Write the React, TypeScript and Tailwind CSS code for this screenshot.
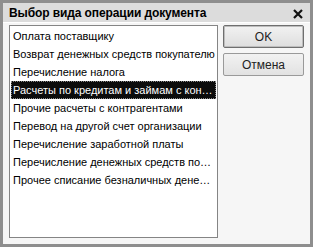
const items = [
  "Оплата поставщику",
  "Возврат денежных средств покупателю",
  "Перечисление налога",
  "Расчеты по кредитам и займам с контрагентами",
  "Прочие расчеты с контрагентами",
  "Перевод на другой счет организации",
  "Перечисление заработной платы",
  "Перечисление денежных средств подотчетнику",
  "Прочее списание безналичных денежных средств",
];

export default function App() {
  const selected = 3;

  return (
    <div
      className="w-[313px] h-[247px] bg-[#8e8e8e] p-[3px] text-black"
      style={{ fontFamily: '"Liberation Sans", Arial, sans-serif' }}
    >
      <div className="flex h-full flex-col bg-[#f6f6f6]">
        {/* Title bar */}
        <div className="flex h-[19px] items-center justify-between bg-[#dcdcdc] pl-[6px] pr-[7px]">
          <span className="text-[12px] font-bold leading-none tracking-[-0.1px]">
            Выбор вида операции документа
          </span>
          <svg width="10" height="10" viewBox="0 0 10 10" className="mt-[2px]">
            <path d="M1 1 L9 9 M9 1 L1 9" stroke="#111" strokeWidth="2.2" />
          </svg>
        </div>

        <div className="flex flex-1 gap-[5px] border-t border-white pt-[2px] pl-[6px] pr-[6px] pb-[6px]">
          {/* List */}
          <div className="w-[209px] border border-[#858585] bg-white pt-px px-px">
            {items.map((item, i) => (
              <div
                key={item}
                className={
                  i === selected
                    ? "h-[18px] truncate border border-dotted border-[#888] bg-[#0c0c0c] pl-px text-[11px] leading-[16px] text-white"
                    : "h-[18px] truncate pl-[2px] text-[11px] leading-[18px]"
                }
              >
                {item}
              </div>
            ))}
          </div>

          {/* Buttons */}
          <div className="flex flex-col gap-[5px]">
            <button className="h-[23px] w-[81px] rounded-[2px] border border-[#6f6f6f] bg-gradient-to-b from-[#f2f2f2] to-[#dedede] text-[12px] text-[#222] shadow-[inset_0_0_0_1px_#bdbdbd]">
              OK
            </button>
            <button className="h-[23px] w-[81px] rounded-[2px] border border-[#9a9a9a] bg-gradient-to-b from-[#f2f2f2] to-[#e2e2e2] text-[12px] text-[#222]">
              Отмена
            </button>
          </div>
        </div>
      </div>
    </div>
  );
}
